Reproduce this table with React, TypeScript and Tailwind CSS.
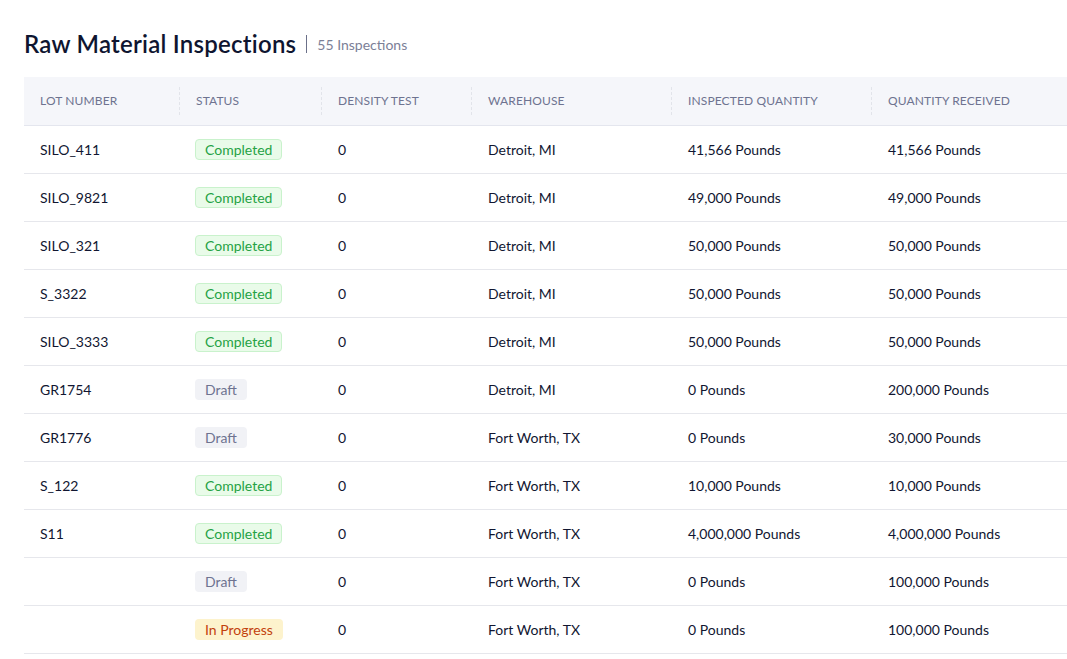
const rows = [
  { lot: "SILO_411", status: "Completed", wh: "Detroit, MI", insp: "41,566 Pounds", recv: "41,566 Pounds" },
  { lot: "SILO_9821", status: "Completed", wh: "Detroit, MI", insp: "49,000 Pounds", recv: "49,000 Pounds" },
  { lot: "SILO_321", status: "Completed", wh: "Detroit, MI", insp: "50,000 Pounds", recv: "50,000 Pounds" },
  { lot: "S_3322", status: "Completed", wh: "Detroit, MI", insp: "50,000 Pounds", recv: "50,000 Pounds" },
  { lot: "SILO_3333", status: "Completed", wh: "Detroit, MI", insp: "50,000 Pounds", recv: "50,000 Pounds" },
  { lot: "GR1754", status: "Draft", wh: "Detroit, MI", insp: "0 Pounds", recv: "200,000 Pounds" },
  { lot: "GR1776", status: "Draft", wh: "Fort Worth, TX", insp: "0 Pounds", recv: "30,000 Pounds" },
  { lot: "S_122", status: "Completed", wh: "Fort Worth, TX", insp: "10,000 Pounds", recv: "10,000 Pounds" },
  { lot: "S11", status: "Completed", wh: "Fort Worth, TX", insp: "4,000,000 Pounds", recv: "4,000,000 Pounds" },
  { lot: "", status: "Draft", wh: "Fort Worth, TX", insp: "0 Pounds", recv: "100,000 Pounds" },
  { lot: "", status: "In Progress", wh: "Fort Worth, TX", insp: "0 Pounds", recv: "100,000 Pounds" },
];

const StatusBadge = ({ status }: { status: string }) => {
  if (status === "Completed")
    return (
      <span className="inline-flex h-[21px] items-center rounded-[4px] border border-[#c9f2cc] bg-[#e9fbe9] px-[9px] text-[14px] text-[#25a244]">
        Completed
      </span>
    );
  if (status === "Draft")
    return (
      <span className="inline-flex h-[21px] items-center rounded-[4px] bg-[#f1f2f6] px-[10px] text-[14px] text-[#6e7390]">
        Draft
      </span>
    );
  return (
    <span className="inline-flex h-[21px] items-center rounded-[4px] bg-[#fdf3cd] px-[10px] text-[14px] text-[#c2410c]">
      In Progress
    </span>
  );
};

const headers = ["Lot Number", "Status", "Density Test", "Warehouse", "Inspected Quantity", "Quantity Received"];
const widths = ["w-[156px]", "w-[142px]", "w-[150px]", "w-[200px]", "w-[200px]", "w-[195px]"];

export default function App() {
  return (
    <div className="min-h-[659px] bg-white pl-[24px] font-['Lato',sans-serif] text-[#111631]">
      <div className="flex items-center gap-[10px] pt-[29px] pb-[18px]">
        <h1 className="text-[24px] font-semibold leading-[30px] tracking-[0.01em] text-[#0e1530]">Raw Material Inspections</h1>
        <span className="h-[18px] w-px bg-[#6b7089]" />
        <span className="text-[14px] text-[#7b8097]">55 Inspections</span>
      </div>
      <table className="w-[1043px] table-fixed border-collapse">
        <thead>
          <tr className="h-[48px] border-b border-[#e4e6ee] bg-[#f5f6fa]">
            {headers.map((h, i) => (
              <th key={h} className={`${widths[i]} p-0 text-left align-middle`}>
                <div className={`flex h-[28px] items-center px-[16px] text-[12px] font-normal uppercase tracking-[0.01em] text-[#6e7390] ${i < 5 ? "border-r border-dashed border-[#e2e4ea]" : ""}`}>
                  {h}
                </div>
              </th>
            ))}
          </tr>
        </thead>
        <tbody>
          {rows.map((r, idx) => (
            <tr key={idx} className="h-[48px] border-b border-[#e6e7ec] text-[14px]">
              <td className="px-[16px]">{r.lot}</td>
              <td className="px-[15px]">
                <StatusBadge status={r.status} />
              </td>
              <td className="px-[16px]">0</td>
              <td className="px-[16px]">{r.wh}</td>
              <td className="px-[16px]">{r.insp}</td>
              <td className="px-[16px]">{r.recv}</td>
            </tr>
          ))}
        </tbody>
      </table>
    </div>
  );
}
